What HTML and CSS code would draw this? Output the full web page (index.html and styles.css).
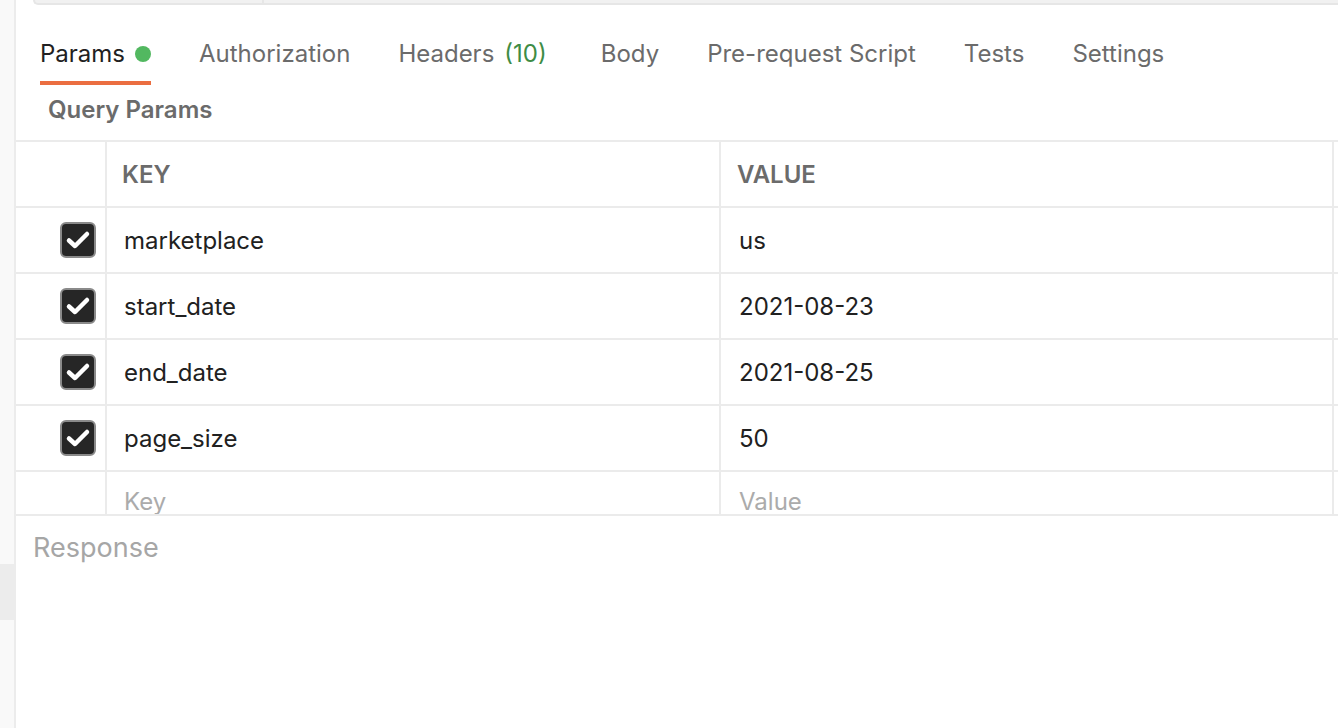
FILE: index.html
```html
<!DOCTYPE html>
<html lang="en">

    <head>
        <meta charset="UTF-8">
        <title>Params</title>
        <link rel="stylesheet" href="styles.css">
    </head>

    <body>

        <div class="sidebar">
            <div class="sidebar-block"></div>
        </div>

        <div class="main">

            <div class="url-bar">
                <div class="url-method"></div>
            </div>

            <nav class="tabs">
                <div class="tab active">Params <span class="dot"></span></div>
                <div class="tab">Authorization</div>
                <div class="tab tab-headers">Headers <span class="count">(10)</span></div>
                <div class="tab">Body</div>
                <div class="tab">Pre-request Script</div>
                <div class="tab">Tests</div>
                <div class="tab">Settings</div>
            </nav>

            <div class="request-panel">

                <h2 class="section-title">Query Params</h2>

                <div class="params-table">

                    <div class="cell"></div>
                    <div class="cell head">KEY</div>
                    <div class="cell head value-col">VALUE</div>
                    <div class="cell last"></div>

                    <div class="cell check-cell"><span class="checkbox"><svg viewBox="0 0 32 32"><path d="M7 16.5 L13 22 L25 10"/></svg></span></div>
                    <div class="cell">marketplace</div>
                    <div class="cell value-col">us</div>
                    <div class="cell last"></div>

                    <div class="cell check-cell"><span class="checkbox"><svg viewBox="0 0 32 32"><path d="M7 16.5 L13 22 L25 10"/></svg></span></div>
                    <div class="cell">start_date</div>
                    <div class="cell value-col">2021-08-23</div>
                    <div class="cell last"></div>

                    <div class="cell check-cell"><span class="checkbox"><svg viewBox="0 0 32 32"><path d="M7 16.5 L13 22 L25 10"/></svg></span></div>
                    <div class="cell">end_date</div>
                    <div class="cell value-col">2021-08-25</div>
                    <div class="cell last"></div>

                    <div class="cell check-cell"><span class="checkbox"><svg viewBox="0 0 32 32"><path d="M7 16.5 L13 22 L25 10"/></svg></span></div>
                    <div class="cell">page_size</div>
                    <div class="cell value-col">50</div>
                    <div class="cell last"></div>

                    <div class="cell"></div>
                    <div class="cell placeholder">Key</div>
                    <div class="cell placeholder value-col">Value</div>
                    <div class="cell last"></div>

                </div>

            </div>

            <div class="response-panel">
                <p class="response-title">Response</p>
            </div>

        </div>

    </body>

</html>
```

FILE: styles.css
```css
body {
    margin: 0;
    padding: 0;
    display: flex;
    height: 728px;
    overflow: hidden;
    background-color: #FFFFFF;
    font-family: Inter, "Noto Sans", sans-serif;
    color: #212121;
}

.sidebar {
    width: 14px;
    flex-shrink: 0;
    background-color: #F9F9F9;
    border-right: 2px solid #ECECEC;
    padding-top: 564px;
}

.sidebar-block {
    height: 56px;
    background-color: #ECECEC;
}

.main {
    flex: 1;
    display: flex;
    flex-direction: column;
    min-width: 0;
}

.url-bar {
    margin-left: 17px;
    height: 3px;
    background-color: #F1F1F1;
    border-left: 2px solid #E6E6E6;
    border-bottom: 2px solid #E6E6E6;
    border-bottom-left-radius: 8px;
}

.url-method {
    width: 227px;
    height: 100%;
    border-right: 2px solid #E6E6E6;
}

.tabs {
    display: flex;
    gap: 48px;
    padding-left: 24px;
}

.tab {
    padding-top: 34px;
    padding-bottom: 12px;
    line-height: 30px;
    font-size: 24px;
    color: #6B6B6B;
    border-bottom: 4px solid transparent;
    display: flex;
    align-items: center;
    gap: 10px;
    white-space: nowrap;
}

.tab.active {
    color: #212121;
    border-bottom-color: #EB6E41;
}

.tab-headers {
    margin-right: 6px;
}

.dot {
    width: 16px;
    height: 16px;
    border-radius: 50%;
    background-color: #52B860;
}

.count {
    color: #3E8C45;
}

.request-panel {
    height: 429px;
    overflow: hidden;
    border-bottom: 2px solid #EBEBEB;
}

.section-title {
    margin: 11px 0 16px 0;
    padding-left: 32px;
    font-size: 24px;
    line-height: 28px;
    font-weight: 600;
    color: #6B6B6B;
}

.params-table {
    display: grid;
    grid-template-columns: 91px 614px 613px 1fr;
    grid-auto-rows: 66px;
    border-top: 2px solid #EBEBEB;
}

.cell {
    box-sizing: border-box;
    border-right: 2px solid #EBEBEB;
    border-bottom: 2px solid #EBEBEB;
    display: flex;
    align-items: center;
    padding-left: 17px;
    font-size: 24px;
}

.cell.value-col {
    padding-left: 18px;
}

.cell.last {
    border-right: none;
}

.head {
    padding-left: 15px;
    font-weight: 600;
    color: #6B6B6B;
}

.cell.head.value-col {
    padding-left: 16px;
}

.placeholder {
    color: #ABABAB;
    align-items: flex-start;
    padding-top: 15px;
}

.check-cell {
    justify-content: flex-end;
    padding-right: 9px;
}

.checkbox {
    width: 36px;
    height: 36px;
    box-sizing: border-box;
    border: 2px solid #8A8A8A;
    border-radius: 6px;
    background-color: #262626;
    display: flex;
}

.checkbox svg {
    width: 32px;
    height: 32px;
    fill: none;
    stroke: #FFFFFF;
    stroke-width: 4.5;
    stroke-linecap: round;
    stroke-linejoin: round;
}

.response-panel {
    flex: 1;
}

.response-title {
    margin: 16px 0 0 17px;
    font-size: 27px;
    line-height: 32px;
    color: #A6A6A6;
}
```
